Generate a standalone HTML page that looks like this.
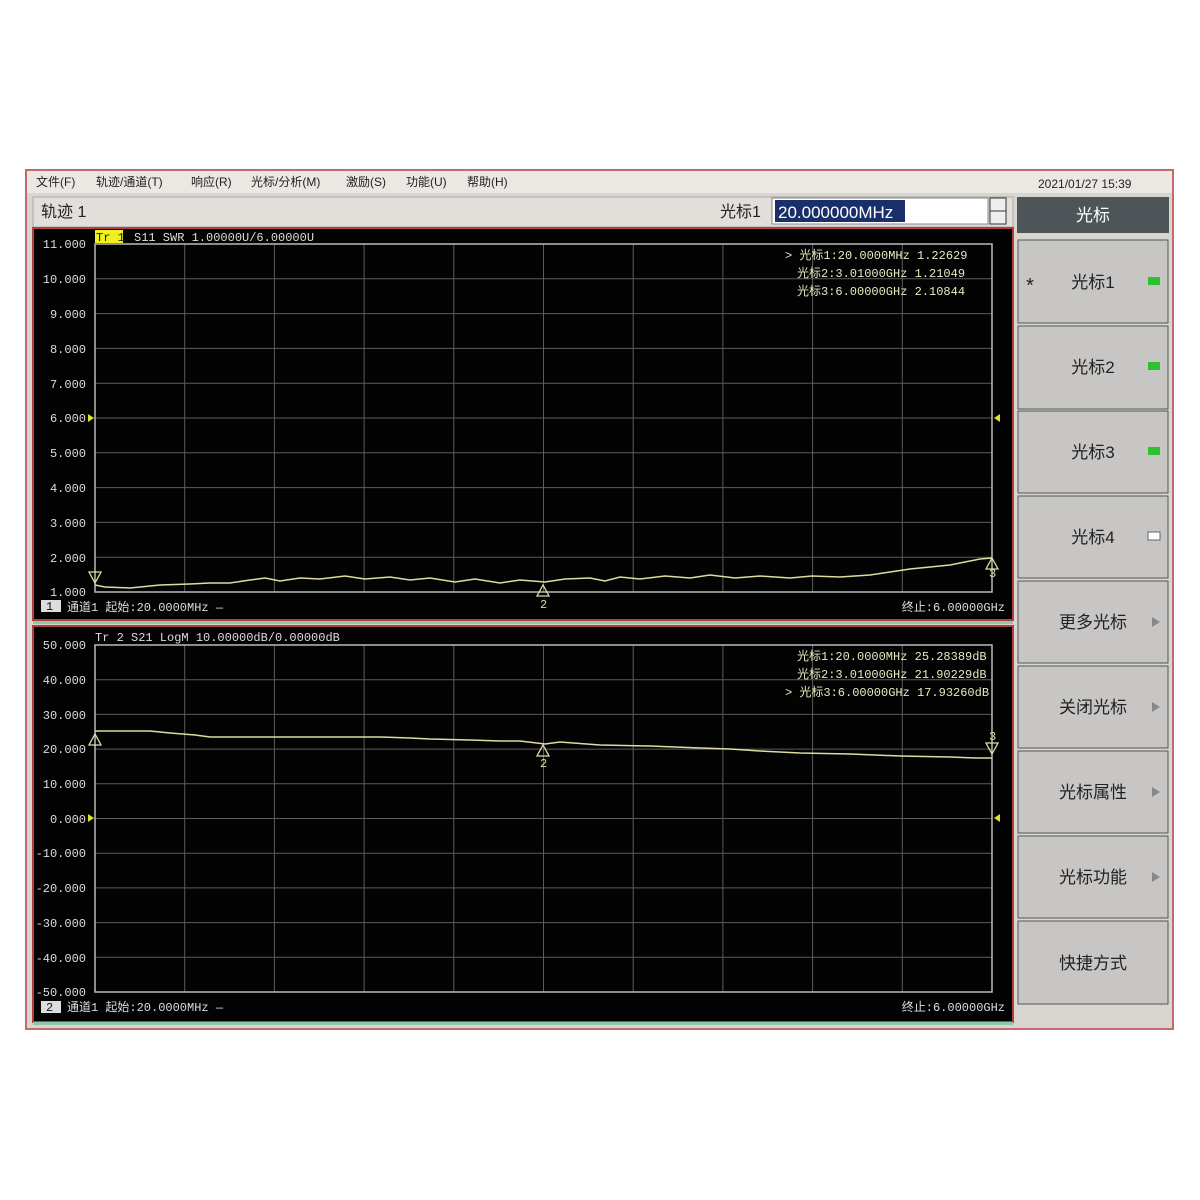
<!DOCTYPE html>
<html><head><meta charset="utf-8"><style>
html,body{margin:0;padding:0;background:#fff;width:1200px;height:1200px;overflow:hidden}
svg{display:block}
.m{font-family:"Liberation Mono","Noto Sans CJK SC",monospace;font-size:12px}
.s{font-family:"Liberation Sans","Noto Sans CJK SC",sans-serif}
</style></head><body>
<svg width="1200" height="1200" viewBox="0 0 1200 1200" xmlns="http://www.w3.org/2000/svg">
<rect x="0" y="0" width="1200" height="1200" fill="#fff"/>
<rect x="26" y="170" width="1147" height="859" fill="#d8d4d0" stroke="#c46a6a" stroke-width="2"/>
<rect x="27" y="171" width="1145" height="22" fill="#ebe7e3"/>
<g class="s" font-size="12" fill="#222">
<text x="36" y="186">文件(F)</text><text x="96" y="186">轨迹/通道(T)</text><text x="191" y="186">响应(R)</text>
<text x="251" y="186">光标/分析(M)</text><text x="346" y="186">激励(S)</text><text x="406" y="186">功能(U)</text><text x="467" y="186">帮助(H)</text>
<text x="1038" y="188">2021/01/27 15:39</text>
</g>
<rect x="33" y="197" width="980" height="30" fill="#e2deda" stroke="#aaa"/>
<text x="41" y="217" class="s" font-size="16" fill="#222">轨迹 1</text>
<text x="720" y="217" class="s" font-size="16" fill="#222">光标1</text>
<rect x="772" y="198" width="216" height="26" fill="#fff" stroke="#888"/>
<rect x="775" y="200" width="130" height="22" fill="#1a2f6a"/>
<text x="778" y="218" class="s" font-size="17" fill="#fff">20.000000MHz</text>
<rect x="990" y="198" width="16" height="26" fill="#eee" stroke="#333"/>
<line x1="990" y1="211" x2="1006" y2="211" stroke="#333"/>
<rect x="1017" y="197" width="152" height="36" fill="#4e5559"/>
<text x="1093" y="221" class="s" font-size="17" fill="#fff" text-anchor="middle">光标</text>
<g class="s" font-size="17" fill="#222" text-anchor="middle">
<rect x="1018" y="240" width="150" height="83" fill="#c8c6c4" stroke="#555"/><text x="1093" y="288">光标1</text>
<rect x="1018" y="326" width="150" height="83" fill="#c8c6c4" stroke="#555"/><text x="1093" y="373">光标2</text>
<rect x="1018" y="411" width="150" height="82" fill="#c8c6c4" stroke="#555"/><text x="1093" y="458">光标3</text>
<rect x="1018" y="496" width="150" height="82" fill="#c8c6c4" stroke="#555"/><text x="1093" y="543">光标4</text>
<rect x="1018" y="581" width="150" height="82" fill="#c8c6c4" stroke="#555"/><text x="1093" y="628">更多光标</text>
<rect x="1018" y="666" width="150" height="82" fill="#c8c6c4" stroke="#555"/><text x="1093" y="713">关闭光标</text>
<rect x="1018" y="751" width="150" height="82" fill="#c8c6c4" stroke="#555"/><text x="1093" y="798">光标属性</text>
<rect x="1018" y="836" width="150" height="82" fill="#c8c6c4" stroke="#555"/><text x="1093" y="883">光标功能</text>
<rect x="1018" y="921" width="150" height="83" fill="#c8c6c4" stroke="#555"/><text x="1093" y="969">快捷方式</text>
<text x="1030" y="292" font-size="20">*</text>
</g>
<rect x="1148" y="277" width="12" height="8" fill="#2ec030"/>
<rect x="1148" y="362" width="12" height="8" fill="#2ec030"/>
<rect x="1148" y="447" width="12" height="8" fill="#2ec030"/>
<rect x="1148" y="532" width="12" height="8" fill="#fff" stroke="#666"/>
<g fill="#888"><path d="M1152 617l8 5l-8 5z"/><path d="M1152 702l8 5l-8 5z"/><path d="M1152 787l8 5l-8 5z"/><path d="M1152 872l8 5l-8 5z"/></g>
<rect x="33" y="228" width="980" height="392" fill="#030303" stroke="#b04040" stroke-width="2"/>
<rect x="33" y="621" width="980" height="3" fill="#8fc8a8"/>
<rect x="33" y="626" width="980" height="396" fill="#030303" stroke="#b04040" stroke-width="2"/>
<rect x="33" y="1022" width="980" height="3" fill="#8fc8a8"/>
<g stroke="#5c5c5c" stroke-width="1">
<path d="M184.7 244V592M274.4 244V592M364.1 244V592M453.8 244V592M543.5 244V592M633.2 244V592M722.9 244V592M812.6 244V592M902.3 244V592M95 278.8H992M95 313.6H992M95 348.4H992M95 383.2H992M95 418H992M95 452.8H992M95 487.6H992M95 522.4H992M95 557.2H992"/>
<path d="M184.7 645V992M274.4 645V992M364.1 645V992M453.8 645V992M543.5 645V992M633.2 645V992M722.9 645V992M812.6 645V992M902.3 645V992M95 679.7H992M95 714.4H992M95 749.1H992M95 783.8H992M95 818.5H992M95 853.2H992M95 887.9H992M95 922.6H992M95 957.3H992"/>
</g>
<rect x="95" y="244" width="897" height="348" fill="none" stroke="#bbb" stroke-width="1.5"/>
<rect x="95" y="645" width="897" height="347" fill="none" stroke="#bbb" stroke-width="1.5"/>
<g class="m" fill="#ddd" text-anchor="end">
<text x="86" y="248">11.000</text><text x="86" y="283">10.000</text><text x="86" y="318">9.000</text><text x="86" y="353">8.000</text><text x="86" y="388">7.000</text><text x="86" y="422">6.000</text><text x="86" y="457">5.000</text><text x="86" y="492">4.000</text><text x="86" y="527">3.000</text><text x="86" y="562">2.000</text><text x="86" y="596">1.000</text>
<text x="86" y="649">50.000</text><text x="86" y="684">40.000</text><text x="86" y="719">30.000</text><text x="86" y="753">20.000</text><text x="86" y="788">10.000</text><text x="86" y="823">0.000</text><text x="86" y="857">-10.000</text><text x="86" y="892">-20.000</text><text x="86" y="927">-30.000</text><text x="86" y="962">-40.000</text><text x="86" y="996">-50.000</text>
</g>
<rect x="95" y="230" width="28" height="13" fill="#f0f020"/>
<g class="m" fill="#ddd">
<text x="96" y="241" fill="#222">Tr 1</text><text x="134" y="241">S11 SWR 1.00000U/6.00000U</text>
<text x="95" y="641">Tr 2  S21 LogM 10.00000dB/0.00000dB</text>
<rect x="41" y="600" width="20" height="12" fill="#ddd"/><text x="46" y="610" fill="#111">1</text>
<rect x="41" y="1001" width="20" height="12" fill="#ddd"/><text x="46" y="1011" fill="#111">2</text>
<text x="67" y="611">通道1  起始:20.0000MHz —</text><text x="67" y="1011">通道1  起始:20.0000MHz —</text>
<text x="1005" y="611" text-anchor="end">终止:6.00000GHz</text><text x="1005" y="1011" text-anchor="end">终止:6.00000GHz</text>
</g>
<g class="m" fill="#e8e8c0" font-size="12">
<text x="785" y="259">&gt; 光标1:20.0000MHz 1.22629</text><text x="797" y="277">光标2:3.01000GHz 1.21049</text><text x="797" y="295">光标3:6.00000GHz 2.10844</text>
<text x="797" y="660">光标1:20.0000MHz 25.28389dB</text><text x="797" y="678">光标2:3.01000GHz 21.90229dB</text><text x="785" y="696">&gt; 光标3:6.00000GHz 17.93260dB</text>
</g>
<g fill="#e0e020"><path d="M88 414l6 4l-6 4z"/><path d="M1000 414l-6 4l6 4z"/><path d="M88 814l6 4l-6 4z"/><path d="M1000 814l-6 4l6 4z"/></g>
<polyline fill="none" stroke="#e0dca0" stroke-width="1.5" points="95,585 105,587 130,588 160,585 190,584 210,583 230,583 250,580 265,578 280,581 300,578 320,579 345,576 365,579 390,577 410,580 430,578 455,582 475,579 500,583 520,580 545,582 565,579 590,578 605,581 620,577 640,579 665,576 690,578 710,575 735,578 760,576 790,578 812,576 840,577 870,575 890,572 910,569 930,567 950,565 965,562 980,559 992,558"/>
<polyline fill="none" stroke="#e0dca0" stroke-width="1.5" points="95,731 150,731 170,733 195,735 210,737 250,737 300,737 330,737 380,737 410,738 430,739 470,740 500,741 520,741 545,744 560,742 600,745 650,746 700,748 730,749 760,751 800,753 850,754 900,756 950,757 975,758 992,758"/>
<g fill="none" stroke="#e0dca0" stroke-width="1.3">
<path d="M89 572h12l-6 11z"/><path d="M537 596h12l-6 -11z"/><path d="M986 569h12l-6 -11z"/>
<path d="M89 745h12l-6 -11z"/><path d="M537 756h12l-6 -11z"/><path d="M986 743h12l-6 11z"/>
</g>
<g class="m" fill="#e0dca0" font-size="10"><text x="540" y="608">2</text><text x="540" y="767">2</text><text x="989" y="577">3</text><text x="989" y="740">3</text></g>
</svg>
</body></html>
